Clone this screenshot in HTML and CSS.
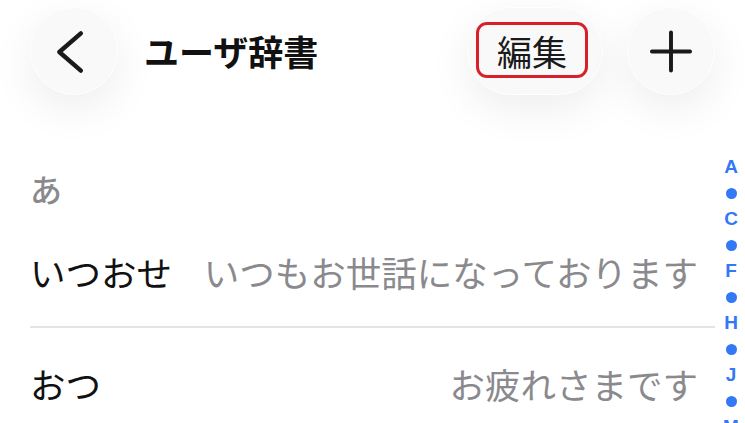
FILE: index.html
```html
<!DOCTYPE html>
<html lang="ja">
<head>
    <meta charset="UTF-8">
    <meta name="viewport" content="width=device-width, initial-scale=1.0">
    <title>ユーザ辞書</title>
    <link rel="stylesheet" href="styles.css">
</head>
<body>
    <div class="page">
        <div class="topbar">
            <button class="round-btn back-btn" aria-label="戻る">
                <svg width="88" height="88" viewBox="0 0 88 88">
                    <polyline points="51,26 29,45 51,64" fill="none" stroke="#1a1a1a" stroke-width="4.5" stroke-linecap="round" stroke-linejoin="round"/>
                </svg>
            </button>
            <h1 class="title">ユーザ辞書</h1>
            <button class="edit-btn"><span class="edit-label">編集</span></button>
            <button class="round-btn add-btn" aria-label="追加">
                <svg width="88" height="88" viewBox="0 0 88 88">
                    <path d="M44 25 V64 M24.5 44.5 H63.5" fill="none" stroke="#1a1a1a" stroke-width="4" stroke-linecap="round"/>
                </svg>
            </button>
        </div>

        <div class="list">
            <div class="section-head">あ</div>
            <div class="row">
                <span class="row-key">いつおせ</span>
                <span class="row-value">いつもお世話になっております</span>
            </div>
            <div class="row last">
                <span class="row-key">おつ</span>
                <span class="row-value">お疲れさまです</span>
            </div>
        </div>

        <div class="index-bar">
            <span>A</span><i class="dot"></i>
            <span>C</span><i class="dot"></i>
            <span>F</span><i class="dot"></i>
            <span>H</span><i class="dot"></i>
            <span>J</span><i class="dot"></i>
            <span>M</span>
        </div>
    </div>
</body>
</html>
```

FILE: styles.css
```css
/* styles.css */
body {
    margin: 0;
    background-color: #ffffff;
    font-family: "Noto Sans CJK JP", "Noto Sans", sans-serif;
    color: #111111;
}

.page {
    position: relative;
    width: 745px;
    height: 423px;
    overflow: hidden;
    background-color: #ffffff;
}

.topbar {
    display: flex;
    align-items: center;
    height: 88px;
    padding: 7px 30px 0 30px;
}

button {
    font-family: inherit;
    padding: 0;
    cursor: pointer;
}

.round-btn {
    width: 88px;
    height: 88px;
    border-radius: 50%;
    border: 1px solid #ffffff;
    background-color: #f9f9f9;
    box-shadow: 0 14px 44px rgba(0, 0, 0, 0.07);
    display: flex;
    align-items: center;
    justify-content: center;
    flex-shrink: 0;
}

.round-btn svg {
    display: block;
}

.title {
    margin: 0 0 2px 26px;
    font-size: 35px;
    font-weight: 700;
    color: #111111;
}

.edit-btn {
    margin-left: auto;
    width: 136px;
    height: 88px;
    border-radius: 44px;
    border: 1px solid #ffffff;
    background-color: #f9f9f9;
    box-shadow: 0 14px 44px rgba(0, 0, 0, 0.07);
    display: flex;
    align-items: center;
    justify-content: center;
}

.edit-label {
    display: flex;
    align-items: center;
    justify-content: center;
    width: 106px;
    height: 50px;
    margin: 0 6px 2px 0;
    border: 3px solid #d9202a;
    border-radius: 11px;
    font-size: 35px;
    color: #1a1a1a;
    line-height: 1;
}

.add-btn {
    margin-left: 24px;
}

.list {
    margin: 0 30px;
}

.section-head {
    margin-top: 65px;
    height: 56px;
    display: flex;
    align-items: center;
    font-size: 32px;
    font-weight: 500;
    color: #8a8a8e;
}

.row {
    display: flex;
    align-items: center;
    height: 110px;
    padding: 0 17px 0 0;
    border-bottom: 2px solid #e4e4e6;
}

.row.last {
    border-bottom: none;
}

.row-key {
    font-size: 35.5px;
    color: #111111;
    white-space: nowrap;
}

.row-value {
    margin-left: auto;
    padding-left: 20px;
    font-size: 35.5px;
    color: #8a8a8e;
    white-space: nowrap;
}

.index-bar {
    position: absolute;
    top: 154px;
    right: 2px;
    width: 24px;
    display: flex;
    flex-direction: column;
    align-items: center;
    font-family: "Liberation Sans", Arial, sans-serif;
    font-weight: 700;
    font-size: 19px;
    color: #3478f6;
}

.index-bar span {
    height: 26px;
    line-height: 26px;
}

.index-bar .dot {
    display: block;
    width: 11px;
    height: 11px;
    margin: 7.5px 0;
    border-radius: 50%;
    background-color: #3478f6;
}
```
